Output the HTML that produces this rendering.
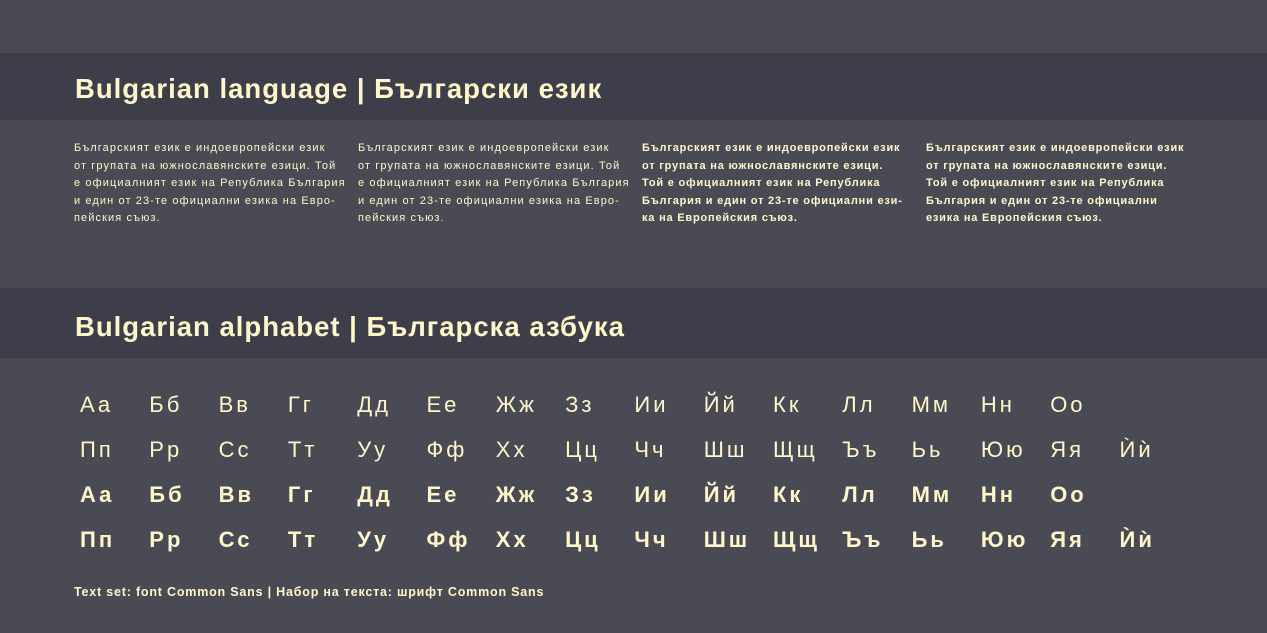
<!DOCTYPE html>
<html><head><meta charset="utf-8"><style>
body{margin:0;width:1267px;height:633px;background:#4a4a55;position:relative;overflow:hidden;font-family:"Liberation Sans","DejaVu Sans",sans-serif;color:#fff6cc}
.band{position:absolute;left:0;width:1267px;background:#3d3e49}
h1{position:absolute;left:75px;margin:0;font-size:27.5px;letter-spacing:1px;font-weight:bold;white-space:nowrap}
.p{position:absolute;top:140px;font-size:11px;line-height:17.5px;white-space:nowrap;letter-spacing:1.1px}
.r{position:absolute;left:0;font-size:22px;letter-spacing:3px;white-space:nowrap}
.r span{position:absolute;}
.f{position:absolute;left:74px;top:585px;font-size:12.5px;letter-spacing:0.8px;font-weight:bold;white-space:nowrap}
</style></head><body>
<div class="band" style="top:53px;height:67px"></div>
<div class="band" style="top:288px;height:70px"></div>
<h1 style="top:73px">Bulgarian language | Български език</h1>
<h1 style="top:311px">Bulgarian alphabet | Българска азбука</h1>
<div class="p" style="left:74px">Българският език е индоевропейски език<br>от групата на южнославянските езици. Той<br>е официалният език на Република България<br>и един от 23-те официални езика на Евро-<br>пейския съюз.</div>
<div class="p" style="left:358px">Българският език е индоевропейски език<br>от групата на южнославянските езици. Той<br>е официалният език на Република България<br>и един от 23-те официални езика на Евро-<br>пейския съюз.</div>
<div class="p" style="left:642px;font-weight:bold;letter-spacing:0.8px">Българският език е индоевропейски език<br>от групата на южнославянските езици.<br>Той е официалният език на Република<br>България и един от 23-те официални ези-<br>ка на Европейския съюз.</div>
<div class="p" style="left:926px;font-weight:bold;letter-spacing:0.8px">Българският език е индоевропейски език<br>от групата на южнославянските езици.<br>Той е официалният език на Република<br>България и един от 23-те официални<br>езика на Европейския съюз.</div>
<div id="rows"></div>
<div class="f">Text set: font Common Sans | Набор на текста: шрифт Common Sans</div>
<script>
var r1="Аа Бб Вв Гг Дд Ее Жж Зз Ии Йй Кк Лл Мм Нн Оо".split(" ");
var r2="Пп Рр Сс Тт Уу Фф Хх Цц Чч Шш Щщ Ъъ Ьь Юю Яя Ѝѝ".split(" ");
var h="";
[[r1,392,0],[r2,437,0],[r1,482,1],[r2,527,1]].forEach(function(a){
h+='<div class="r" style="top:'+a[1]+'px;font-weight:'+(a[2]?'bold':'normal')+'">';
a[0].forEach(function(s,i){h+='<span style="left:'+(80+i*69.3)+'px">'+s+'</span>';});
h+='</div>';});
document.getElementById('rows').innerHTML=h;
</script>
</body></html>
